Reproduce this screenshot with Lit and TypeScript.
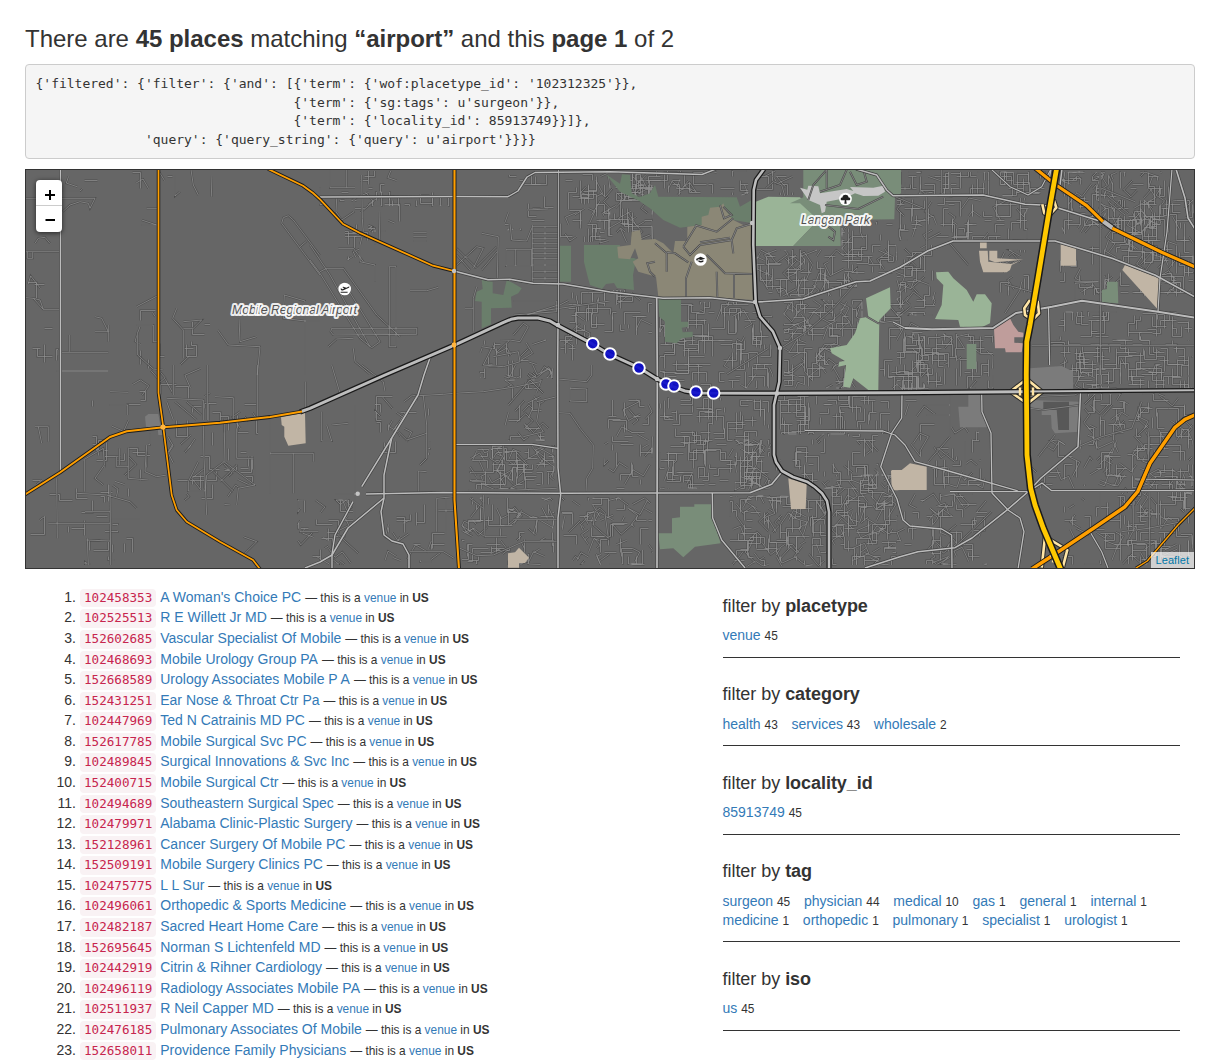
import { LitElement, html, svg, css } from "lit";
import { customElement, property } from "lit/decorators.js";

/* ---------- map data ---------- */

/** The map was digitised in sheets at three times its size; this brings a sheet's points to map units. */
const sheet = (ox: number, oy: number) => (points: string): string =>
  points
    .trim()
    .split(/\s+/)
    .map((pair) => {
      const [x, y] = pair.split(",").map(Number);
      return `${(ox + x / 3).toFixed(1)},${(oy + y / 3).toFixed(1)}`;
    })
    .join(" ");

const nw = sheet(20, 165);
const sw = sheet(20, 365);
const n2 = sheet(310, 165);
const s2 = sheet(310, 365);
const n3 = sheet(600, 165);
const s3 = sheet(600, 365);
const ne = sheet(895, 165);
const se = sheet(895, 365);

const MOSS = "#6a7e6b";
const SAGE = "#798d79";
const MINT = "#9ab497";
const CAMPUS = "#8b8776";
const SCHOOL = "#c1b5a5";
const PAVED = "#7b7b7b";

const AREAS: [string, string][] = [
  [MOSS, n2("750,242 783,242 783,350 750,350")],
  [MOSS, "584,245 620,245 618,258 634,258 638,260 635,265 633,275 634,290 617,288 614,283 606,284 602,289 590,285 588,278 584,262"],
  [MOSS, n2("515,345 548,350 548,385 580,390 590,345 610,355 635,370 625,385 603,395 605,428 543,430 543,478 515,490 515,410 495,408 500,380 518,372")],
  [MOSS, n3("18,28 60,56 66,28 90,30 95,85 118,97 150,85 165,60 175,95 410,97 420,125 455,105 458,175 400,165 360,145 305,180 240,188 190,165 150,130 118,108 60,80")],
  [CAMPUS, n3("370,115 380,140 400,165 430,180 455,178 458,405 330,395 175,395 168,335 115,320 98,290 115,280 105,250 90,283 55,280 52,245 92,240 95,200 120,195 125,225 165,222 190,235 220,265 225,228 262,228 262,185 305,180 305,155 325,150 330,128 360,125")],
  [MOSS, n3("175,402 243,402 243,470 265,470 265,485 245,488 248,502 278,500 278,515 245,520 230,535 195,530 195,470 178,455")],
  [MINT, n3("467,110 505,95 600,97 655,165 580,243 467,243")],
  [SAGE, n3("610,14 903,14 903,85 885,95 883,163 720,165 722,243 580,243 655,165 600,115 570,115 610,97")],
  ["#c6c6c6", n3("600,68 622,74 625,62 655,64 660,85 740,72 760,78 750,66 820,68 850,62 855,80 835,92 790,93 765,85 735,100 680,110 675,140 665,145 660,120 625,105 615,90")],
  [MINT, n3("870,367 872,430 838,465 835,678 805,675 760,640 750,668 730,665 738,600 715,605 718,590 735,588 695,565 690,550 740,540 765,505 780,460 805,455 798,400")],
  [MINT, ne("123,322 160,320 175,340 215,375 235,410 245,388 270,388 290,415 285,475 260,487 195,485 190,465 130,463 120,462 140,420 145,360 125,340")],
  [SCHOOL, ne("255,230 275,230 275,250 255,250")],
  [SCHOOL, ne("252,257 278,257 280,290 350,297 380,284 350,300 345,315 335,322 265,322 255,290")],
  [SCHOOL, ne("283,257 307,257 307,280 385,284 300,292 283,285")],
  [SCHOOL, ne("497,238 543,250 543,302 497,302")],
  [SCHOOL, ne("682,315 690,300 792,340 790,435")],
  [SAGE, ne("636,350 668,350 670,415 620,412 620,375 636,372")],
  [SAGE, ne("215,537 244,537 244,612 215,612")],
  ["#bf9d9b", ne("297,492 345,460 355,480 370,500 385,503 385,517 358,517 358,533 385,535 380,562 332,562 330,550 300,550")],
  [PAVED, se("405,10 500,3 535,20 535,75 405,75")],
  [PAVED, se("190,125 220,125 220,90 258,90 262,140 275,165 275,187 195,187")],
  [PAVED, se("405,105 552,110 552,200 480,205 470,190 468,150 440,150 440,135 405,135")],
  ["#585858", se("445,110 522,110 522,195 490,195 485,135 445,135")],
  [SCHOOL, se("-10,315 20,315 45,295 95,305 95,375 -10,375")],
  [SCHOOL, s3("565,340 620,358 617,432 573,433")],
  [SCHOOL, s3("873,317 895,317 895,376 876,376")],
  [SAGE, s3("175,505 216,505 216,460 240,457 240,425 283,425 283,418 333,418 338,460 362,535 285,545 250,577 220,550 180,553")],
  [SCHOOL, s2("594,565 615,562 627,548 657,578 645,594 627,594 627,608 594,608")],
  [SCHOOL, sw("783,157 855,143 857,235 805,242 793,215 793,185 785,180")],
  [PAVED, sw("375,155 385,147 415,147 422,185 428,210 415,210 413,190 378,185")],
  ["#4a4538", se("352,80 395,44 440,80 396,116")],
];

/** Grey roads: line width, then points. */
const ROADS: [number, string][] = [
  [1.4, "60.5,169 60.5,472"],
  [1.4, "320,197 454,196.5 508,196.7 518,191 527,177 535,172.5 610,171.7 702,174.5 716,169"],
  [1.6, "454,271 488,279.7 510,279.3 533,283.3 563,284 610,292 663,298.3 710,297.7 753,302.3 803,299 856,281.7 870,281 900,267.3 928,250.7 953,241 1055,241 1112,258.3 1155,275 1195,297"],
  [0.8, "558.5,169 558.5,325"],
  [1.5, "558,325 557.7,365 558,468 560.7,495 558,518 558,569"],
  [1.3, "454,444.3 531.7,444.3 558,448.3"],
  [1.6, "366,494 443,492.5 560,493.3 750,492.7 771.7,484.3 782,471.7"],
  [1.5, "430.7,355.7 424,375 418,395 391.7,438 361.7,486.7"],
  [1.4, "353,501.7 335,535 332,554 332,569"],
  [1.5, "391.7,438 384,475 384,498 381,511.7 384,535 392,541 403,544 409,555 409,569"],
  [1.5, "384,498 348,528 332,555 320,562 305,568"],
  [1.7, "656.7,298 657.3,375 657,569"],
  [1.4, "712.3,493 712.7,518 721.7,540 745,568"],
  [1.3, "805,430.3 883,431 895,435 905,445 915,461.7 945,470 1018,491"],
  [1.3, "902,393 901.7,418 891.7,433 880.7,466.7 897,499 903,520 910,526 941.7,529 951.7,535 952,569"],
  [1.5, "865,568 900,556.7 918,551.7 955,547.7 972,538 1005,511.7 1028,491.7 1041,478 1078,446.7 1080.5,393"],
  [1.3, "981.7,394 982,411.7 991,433 992,493 1008,510 1020,518 1024,531.7 1018,569"],
  [1.3, "950,491.7 1028,491.7 1042,483 1051.7,490.7 1195,490.7"],
  [1.1, "1135,479 1195,480"],
  [1.2, "1090,531.7 1101.7,551.7 1108,568"],
  [1.5, "856,169 876.7,175 886.7,190 893,195.7 983,195 1025,204.3 1041.7,205 1058,208 1102,221.7"],
  [1.1, "991,169 1010,186.7 1028,195 1041.7,186.7 1051,169"],
  [1.9, "905,328 932,329.3 993,328 1016,313 1052,306.7 1082,300.7 1158,311.7 1195,317.7"],
  [1.1, "893,322 905,328"],
  [1.2, "1172,169 1167,232 1160,278 1158,312"],
  [1.6, "1176,169 1185,198 1188,218 1195,229"],
  [1.2, "1048.5,308 1049.7,365"],
  [1.3, "1051,169 1049,180"],
  [1.5, "1062,169 1060,185"],
];

const ARTERIALS: [number, string][] = [
  [3, "300,412 310,408.3 385,375 454,345.3 503,322.7 511,319.3 518,318 538,318 550,321 558,325.7 592,343.7 609,354 639,367.7 657,379 674,387 685,391 697,393 777,393.3 895,392.7 1028,391.7"],
  [2, "1028,391.5 1195,390.3"],
  [2.6, "764,169 756,180 753.7,190 753.3,245 755.7,302.3 760,316.7 773,331.7 780,347.7 779.3,381.7 774,405 774,455 776,462 782,471 793,477 807,481.7 815,487 822,493.3 827,501 829,511.7 829,569"],
];

const ORANGE: [number, string][] = [
  [1.7, "158.5,169 158.5,393 163.3,427.3 171.7,495 176.7,510 186.7,521.7 220,541.7 253,560 260,569"],
  [2, "25,494.5 60,472.5 110,437 126.7,431.3 163.3,427.3 220,422.7 270,417 302,411.5"],
  [1.8, "268,169 303,185.7 313,193 320,199.3 343,224 360,233 433,265.7 454,271"],
  [2.1, "454.5,169 454.5,500 459,569"],
  [3.2, "1035,168 1056,185 1086.7,205.7 1103,221.7"],
  [3.2, "1112.3,228.3 1161.7,252.3 1195,267"],
  [3.5, "1032,569 1055,554 1095,527.3 1125,506.7 1137.7,491.7 1150,463.3 1175,427.3 1185,419.3 1195,415"],
  [1.4, "1136,568 1147.3,561 1178,525 1195,508"],
];

const RAMPS = [
  se("346,80 395,42 442,80 397,116 346,80"),
  se("440,608 450,515 517,555 503,608"),
  ne("405,405 388,430 390,450 412,465 432,445 428,408"),
  ne("442,118 448,145 462,152 484,128 476,104"),
];

const INTERSTATE =
  "1056.7,168 1049,211.7 1038,278 1030,325 1026.7,341.7 1026.3,375 1027,455 1030.7,488.3 1035,505 1043.3,528.3 1061,570";

/** Lanes traced by hand: airfield, campus and the larger estates. */
const LANES: string[] = [
  nw("900,330 785,175 790,158 805,152 820,165 900,272"),
  nw("840,245 860,228"),
  nw("128,140 150,120 180,110 205,115 210,130 225,100 18,100"),
  nw("128,78 180,78 187,72"), nw("18,260 120,260"), nw("22,260 22,280 38,280 38,262"),
  nw("18,398 40,400 70,433 120,433"), nw("40,400 60,405 70,433"),
  nw("45,235 55,220 75,217 90,235"), nw("350,425 413,392"),
  nw("125,562 265,562"), nw("125,618 265,618"), nw("148,510 148,560"),
  nw("465,30 465,93 480,80"), nw("513,14 520,60 535,90"), nw("573,30 575,95"),
  nw("380,130 413,130"), nw("365,165 410,180 365,180"), nw("350,480 400,480 400,530 413,530"),
  nw("353,500 353,570 400,612 430,615"), nw("470,430 458,460 490,495 490,580"), nw("490,470 545,465 520,490 490,490"),
  nw("593,495 625,540 720,545 712,630"), nw("657,460 660,530 710,515"), nw("793,390 790,460 855,468 900,468"),
  nw("793,390 855,408 855,630"), nw("265,480 265,530"), nw("225,455 245,460 265,500 225,500"),
  n2("0,240 60,330 180,545"), n2("0,285 30,325 150,520 185,548 210,530 100,350"),
  n2("30,320 50,310 100,310 200,450 270,515"), n2("65,490 320,490 320,508 70,510 62,500 65,490"),
  n2("238,305 238,545 258,545 258,305 238,305"), n2("55,545 80,522 130,520"), n2("130,550 135,590 180,628"),
  n2("155,30 157,160 160,200 150,240 150,290 195,300 195,350"), n2("85,250 130,250 160,290"),
  n2("60,14 60,68 135,68"), n2("110,14 110,68"), n2("80,100 78,140 95,165 132,140 132,100"),
  n2("300,377 350,377 385,367"), n2("208,230 210,135"), n2("310,203 350,203"), n2("310,215 350,215"), n2("310,228 350,228"),
  n2("515,205 565,215 562,340"), n2("440,300 500,245 520,250 490,310"), n2("500,305 560,245"), n2("515,315 562,260"),
  n2("440,250 500,310"), n2("440,270 480,315"), n2("588,253 665,253 665,303 588,303 588,253"), n2("617,253 617,303"),
  n2("667,185 745,185"), n2("667,205 745,205"), n2("667,220 745,220"), n2("667,235 745,235"), n2("667,250 745,250"),
  n2("667,265 745,265"), n2("667,280 745,280"), n2("667,300 745,300"), n2("667,320 745,320"), n2("667,340 745,340"),
  n2("667,180 667,350"), n2("705,185 705,350"), n2("500,365 490,400 490,500"), n2("465,430 490,430"),
  n2("650,135 715,132"), n2("600,175 605,225 650,228 665,190"), n2("610,408 740,408 740,440 610,450"),
  n2("515,545 545,550 520,600 580,605 630,590 625,560 550,575"), n2("610,510 640,475 655,485 630,530 600,525"),
  n2("680,440 900,408"), n2("650,450 745,420"),
  s2("135,120 135,470"), s2("35,140 35,228 65,228 50,180"), s2("65,180 115,175"), s2("325,92 400,88 432,85 520,80 620,65 690,50"),
  s2("65,0 90,85"), s2("155,0 220,50 225,80"), s2("325,318 325,380"), s2("325,318 350,320"), s2("340,92 350,180 350,280 330,300"),
  s2("265,200 290,225 350,205"), s2("380,400 432,395"), s2("380,400 380,500"), s2("385,437 432,437"), s2("408,400 408,510"),
  s2("745,143 780,145 810,190 850,240 848,310 830,340 828,380"), s2("745,42 830,50 845,30 845,0"), s2("780,70 830,72 830,110 780,108 780,50"),
  s2("540,240 540,280 565,295 580,270 580,240"), s2("475,375 620,375 740,370"), s2("485,350 525,350"), s2("485,323 525,323"),
  s2("595,120 660,45 700,85"), s2("680,110 740,95"), s2("690,110 680,170 700,200 640,215"),
  s2("450,550 500,572 550,570 640,530 745,530"), s2("610,463 745,463"), s2("520,390 525,515 590,515"), s2("480,400 520,430"),
  s2("855,440 870,430 885,445 895,520 850,480 855,440"), s2("300,560 400,560 432,580"), s2("85,510 145,565"), s2("75,387 140,387"),
  sw("45,185 85,185 85,230"), sw("55,185 65,235"), sw("110,18 265,18"), sw("268,120 323,120 323,150"), sw("270,80 325,82"),
  sw("190,285 250,250 253,300 225,340 250,360"), sw("193,285 193,380"), sw("170,385 260,390 330,410 350,430"),
  sw("85,475 270,475"), sw("110,340 112,520"), sw("195,440 270,440"), sw("270,360 272,600"), sw("275,462 360,462"),
  sw("200,525 270,528"), sw("202,520 205,600"), sw("290,275 290,305 325,305"), sw("325,248 325,340 385,345"), sw("298,250 298,300"),
  sw("380,240 375,320 410,335 440,330"), sw("440,100 550,105 550,165"), sw("440,110 460,165"), sw("465,110 530,165"),
  sw("500,110 545,150"), sw("585,95 640,98 640,160"), sw("550,180 552,280 560,450"), sw("615,160 612,290"),
  sw("535,290 505,350 505,378 555,378 560,330 612,290 705,360"), sw("580,320 640,380"), sw("600,350 650,300"),
  sw("650,190 650,280 700,280"), sw("705,300 705,360 655,370 650,420"), sw("750,155 750,385"), sw("750,265 880,265 880,290"),
  sw("820,265 820,385"), sw("712,0 712,155"), sw("562,0 562,165"), sw("857,50 857,140"), sw("460,0 460,90"),
  sw("670,515 710,530 670,570"), sw("840,470 840,500 895,500"),
  n3("285,180 350,200 400,160"), n3("250,245 290,180"), n3("250,245 270,270 300,240 395,225 410,190 450,178"),
  n3("300,232 390,218"), n3("395,225 400,265"), n3("320,270 375,325 458,327"), n3("275,290 258,340 258,395"),
  n3("350,320 352,395"), n3("402,327 402,398"), n3("165,235 200,265 200,320"), n3("200,262 225,265 265,292"),
  n3("165,335 150,320 142,295 165,290"), n3("360,120 372,160 395,150 370,125"),
  n3("625,105 640,60 680,14"), n3("680,14 680,70"), n3("660,80 720,60 740,14"), n3("675,120 775,132 850,95"),
  n3("680,180 705,200 700,225 685,215"), n3("750,20 770,60 800,50 790,14"), n3("498,70 520,50 545,60 555,95"),
  n3("545,548 620,500 700,430 770,350"), n3("505,550 380,628"), n3("800,455 835,475 900,465"),
  ne("620,70 720,110"), ne("635,90 700,145"), ne("640,110 690,150"), ne("330,445 375,375 380,350"), ne("160,230 220,300"),
  ne("615,14 617,630"), ne("165,14 165,80"), ne("140,14 140,85"), ne("410,542 897,542"), ne("330,358 410,380"),
  ne("95,85 95,260"), ne("0,95 85,130"), ne("540,350 610,350 540,355 540,400"),
  se("405,130 440,135 555,120"), se("430,275 480,210"), se("550,245 620,215 710,190 740,110"), se("55,235 75,205 100,215 75,258"),
  se("100,290 165,215"), se("130,250 180,290"), se("210,230 210,340"), se("95,120 165,120"), se("95,150 165,150"), se("165,90 165,215"),
  se("400,95 540,90 548,85"), se("615,0 615,60 700,60"), se("615,380 615,490"), se("760,200 765,600"), se("185,540 290,440"),
  se("680,500 760,490 860,470"), se("790,380 790,480"), se("715,390 715,500"),
];

/** Residential zones: x, y, width, height, how many lanes, share of slanted ones. */
const ZONES: number[][] = [
  [28, 275, 30, 90, 8, 0.4], [28, 480, 90, 80, 16, 0.2], [90, 380, 60, 115, 18, 0.2], [168, 400, 90, 105, 40, 0.4],
  [65, 171, 120, 20, 6, 0.2], [135, 310, 75, 100, 20, 0.4], [85, 530, 50, 34, 6, 0.2], [298, 500, 55, 64, 28, 0.5], [320, 171, 80, 60, 16, 0.3],
  [345, 225, 30, 35, 10, 0.4], [375, 395, 55, 60, 20, 0.3], [385, 500, 60, 62, 18, 0.4], [340, 192, 110, 14, 14, 0], [505, 175, 50, 55, 14, 0.3],
  [560, 172, 50, 70, 40, 0.3], [480, 340, 72, 38, 28, 0.5], [505, 380, 48, 60, 26, 0.4], [470, 446, 84, 44, 70, 0.4],
  [462, 498, 92, 66, 66, 0.4], [560, 290, 92, 45, 46, 0.2], [560, 325, 30, 36, 14, 0.4], [604, 400, 48, 90, 34, 0.4], [562, 498, 90, 66, 60, 0.5],
  [600, 185, 52, 58, 44, 0.4], [630, 171, 118, 24, 44, 0.3], [660, 302, 112, 86, 120, 0.1], [660, 398, 110, 90, 120, 0.1],
  [735, 440, 44, 50, 34, 0.6], [730, 496, 96, 70, 110, 0.4], [757, 171, 40, 24, 10, 0.4], [757, 250, 100, 46, 80, 0.3], [784, 300, 78, 88, 110, 0.4],
  [778, 396, 112, 38, 56, 0], [780, 434, 98, 54, 50, 0.2], [832, 475, 64, 90, 110, 0.35], [842, 222, 54, 54, 40, 0.2],
  [880, 300, 44, 90, 40, 0.1], [897, 172, 150, 24, 56, 0.1], [897, 198, 130, 42, 70, 0.1], [897, 245, 38, 70, 40, 0.3],
  [897, 334, 96, 54, 74, 0.1], [1000, 250, 30, 48, 12, 0.5], [905, 400, 74, 60, 18, 0.3], [897, 494, 90, 70, 60, 0.4], [925, 460, 60, 30, 16, 0.3],
  [1050, 340, 142, 48, 110, 0.05], [1052, 312, 140, 28, 40, 0], [1062, 172, 108, 62, 96, 0.4], [1105, 200, 88, 96, 130, 0.25],
  [1060, 245, 60, 50, 20, 0.2], [1084, 394, 108, 92, 110, 0.4], [1060, 494, 130, 70, 50, 0.3], [1122, 470, 70, 94, 70, 0.3], [1030, 440, 50, 48, 14, 0.5],
];

const streets = (): string => {
  let seed = 20160117;
  const rnd = () => {
    seed = (Math.imul(seed, 1664525) + 1013904223) >>> 0;
    return seed / 4294967296;
  };
  const out: string[] = [];
  for (const [zx, zy, w, h, count, slant] of ZONES) {
    const clampX = (v: number) => Math.max(zx, Math.min(zx + w, v));
    const clampY = (v: number) => Math.max(zy, Math.min(zy + h, v));
    for (let i = 0; i < count; i++) {
      let x = Math.round((zx + rnd() * w) / 4) * 4 + 0.5;
      let y = Math.round((zy + rnd() * h) / 4) * 4 + 0.5;
      const tilt = rnd() < slant ? 0.3 + rnd() * 0.9 : 0;
      let upright = rnd() < 0.55;
      let d = `M${x},${y}`;
      const legs = 1 + Math.floor(rnd() * 2.4);
      for (let k = 0; k < legs; k++) {
        const length = (rnd() < 0.5 ? -1 : 1) * (4 + Math.round(rnd() * (upright ? 14 : 12)));
        const dx = upright ? 0 : length;
        const dy = upright ? length : 0;
        x = clampX(x + dx * Math.cos(tilt) - dy * Math.sin(tilt));
        y = clampY(y + dx * Math.sin(tilt) + dy * Math.cos(tilt));
        d += `L${x.toFixed(1)},${y.toFixed(1)}`;
        upright = !upright;
      }
      out.push(d);
    }
  }
  return out.join("");
};

const STREETS = streets();
const LANE_PATH = LANES.map((l) => `M${l.replace(/ /g, "L")}`).join("");

const MARKERS = [[592.7, 343.7], [610, 354], [639, 368], [666, 384], [674, 386], [696, 392], [713.7, 393]];
const NODES = [[454, 345], [454, 271], [163, 427], [657, 379], [777, 393.5], [755, 302], [780, 348], [558, 325], [357.7, 493.7], [752, 223]];

@customElement("place-map")
class PlaceMap extends LitElement {
  static styles = css`
    :host { display: block; position: relative; height: 398px; border: 1px solid #333; background: #666; overflow: hidden; }
    .canvas { display: block; width: 1168px; height: 398px; }
    .line { fill: none; stroke-linejoin: round; }
    .street-edge { fill: none; stroke: #4c4c4c; stroke-width: 2; }
    .street { fill: none; stroke: #919191; stroke-width: 0.75; }
    .label { font: italic 12.5px "Liberation Sans", Arial, sans-serif; fill: #505050; stroke: #fff; stroke-opacity: 0.9; stroke-width: 4px; paint-order: stroke; stroke-linejoin: round; }
    .zoom { position: absolute; left: 10px; top: 10px; width: 26px; border-radius: 4px; background: #fff; box-shadow: 0 1px 5px rgba(0, 0, 0, 0.65); }
    .zoom-button { display: flex; align-items: center; justify-content: center; box-sizing: border-box; height: 26px; padding: 5px 0 0 1px; }
    .zoom-button:first-child { border-bottom: 1px solid #ccc; }
    .zoom-button + .zoom-button { padding-top: 1px; }
    .credit { position: absolute; right: 0; bottom: 0; padding: 0 5px; font: 11px/16px "Liberation Sans", Arial, sans-serif; letter-spacing: 0.05px; color: #0078a8; background: rgba(255, 255, 255, 0.7); }
  `;

  private cased(lines: [number, string][], color: string, edge: string, extra: number) {
    return svg`
      ${lines.map(([w, p]) => svg`<polyline class="line" points=${p} stroke=${edge} stroke-width=${w + extra}></polyline>`)}
      ${lines.map(([w, p]) => svg`<polyline class="line" points=${p} stroke=${color} stroke-width=${w}></polyline>`)}`;
  }

  render() {
    return html`
      <svg class="canvas" viewBox="26 170 1168 398" aria-hidden="true">
        <path class="street-edge" d=${STREETS}></path>
        <path class="street" d=${STREETS}></path>
        ${AREAS.map(([fill, p]) => svg`<polygon points=${p} fill=${fill}></polygon>`)}
        <path class="street-edge" d=${LANE_PATH}></path>
        <path class="street" d=${LANE_PATH}></path>
        ${this.cased(ROADS, "#bcbcbc", "#424242", 1.4)}
        ${this.cased(RAMPS.map((p) => [2.6, p] as [number, string]), "#ffe5a5", "#2b2b2b", 2)}
        ${this.cased([[4, "1100,219 1114,229"]], "#b9b9b9", "#222", 2)}
        ${this.cased(ARTERIALS, "#bdbdbd", "#1a1a1a", 2.4)}
        ${this.cased(ORANGE, "#ff9f00", "#1c1c1c", 1.8)}
        ${NODES.map(([x, y]) => svg`<circle cx=${x} cy=${y} r="2.2" fill="#c4c4c4"></circle>`)}
        <circle cx="454" cy="345" r="2.4" fill="#ffb540"></circle>
        <circle cx="163" cy="427" r="2.6" fill="#ffb540"></circle>
        <path d="M1020 387.5v8M1033 387.5v8M1050 556l5-2M1052 561l5 1" stroke="#ffe5a5" stroke-width="2.4"></path>
        ${this.cased([[4.8, INTERSTATE]], "#ffc800", "#1a1a1a", 3)}

        <circle cx="344.7" cy="289" r="6.3" fill="#fff"></circle>
        <path d="M340.6 291.7h7v1h-7zM340.4 288.8l1-.2 1.2.7 1.5-.7-1.8-1.5 1-.3 3 .9 2.2-1c.9-.4 1.3.5.4 1l-6 2.7c-.9.4-1.6.2-2.5-1.6z" fill="#222"></path>
        <circle cx="700.5" cy="259.5" r="6.3" fill="#fff"></circle>
        <path d="M696 259l4.6-2.3 4.6 2-4.3 1.4-2.3-.8-1 .5-.4 1.8zM698.4 260.2l2.4.9 2.6-.9v1.5c-1.6 1-3.6 1-5 0z" fill="#222"></path>
        <circle cx="845.5" cy="199" r="6.3" fill="#fff"></circle>
        <path d="M841.5 200.3c-1.6-1-.6-3 .9-2.8.2-2 1.7-2.7 3.1-2.7s2.9.7 3.1 2.7c1.5-.2 2.5 1.8.9 2.8h-3.3l.5 3.500h-2.400l.5-3.500z" fill="#222"></path>

        <text class="label" x="232" y="314" textLength="125" lengthAdjust="spacing">Mobile Regional Airport</text>
        <text class="label" x="801" y="224" textLength="69" lengthAdjust="spacing">Langan Park</text>

        ${MARKERS.map(([x, y]) => svg`<circle cx=${x} cy=${y} r="5.8" fill="#0c0ccb" fill-opacity=".93" stroke="#fff" stroke-width="2"></circle>`)}
      </svg>
      <div class="zoom">
        <div class="zoom-button"><svg width="12" height="12" viewBox="0 0 12 12"><path d="M1 6h10M6 1v10" stroke="#000" stroke-width="2"></path></svg></div>
        <div class="zoom-button"><svg width="12" height="12" viewBox="0 0 12 12"><path d="M1.5 6h9.5" stroke="#000" stroke-width="2"></path></svg></div>
      </div>
      <div class="credit">Leaflet</div>
    `;
  }
}

/* ---------- search facets ---------- */

@customElement("facet-block")
class FacetBlock extends LitElement {
  @property() name = "";
  @property({ attribute: false }) entries: [string, number][] = [];

  static styles = css`
    :host { display: block; border-bottom: 1px solid #333; padding: 26.2px 0 11.5px; }
    .title { margin: 0 0 10.5px; font-size: 18px; line-height: 20px; font-weight: 500; letter-spacing: -0.04px; }
    .title-name { font-weight: 700; }
    .entries { display: flex; flex-wrap: wrap; column-gap: 13.8px; margin: 0; padding: 0; list-style: none; line-height: 19.2px; }
    .entry { height: 19.2px; white-space: nowrap; }
    .link { color: #337ab7; }
    .count { font-size: 11.9px; }
  `;

  render() {
    return html`
      <h4 class="title">filter by <span class="title-name">${this.name}</span></h4>
      <ul class="entries">
        ${this.entries.map(([label, n]) => html`<li class="entry"><a class="link">${label}</a> <span class="count">${n}</span></li>`)}
      </ul>`;
  }
}

const QUERY = `{'filtered': {'filter': {'and': [{'term': {'wof:placetype_id': '102312325'}},
                                 {'term': {'sg:tags': u'surgeon'}},
                                 {'term': {'locality_id': 85913749}}]},
              'query': {'query_string': {'query': u'airport'}}}}`;

const PLACES: [string, string][] = [
  ["102458353", "A Woman's Choice PC"],
  ["102525513", "R E Willett Jr MD"],
  ["152602685", "Vascular Specialist Of Mobile"],
  ["102468693", "Mobile Urology Group PA"],
  ["152668589", "Urology Associates Mobile P A"],
  ["152431251", "Ear Nose & Throat Ctr Pa"],
  ["102447969", "Ted N Catrainis MD PC"],
  ["152617785", "Mobile Surgical Svc PC"],
  ["102489845", "Surgical Innovations & Svc Inc"],
  ["152400715", "Mobile Surgical Ctr"],
  ["102494689", "Southeastern Surgical Spec"],
  ["102479971", "Alabama Clinic-Plastic Surgery"],
  ["152128961", "Cancer Surgery Of Mobile PC"],
  ["152509191", "Mobile Surgery Clinics PC"],
  ["102475775", "L L Sur"],
  ["102496061", "Orthopedic & Sports Medicine"],
  ["102482187", "Sacred Heart Home Care"],
  ["152695645", "Norman S Lichtenfeld MD"],
  ["102442919", "Citrin & Rihner Cardiology"],
  ["102496119", "Radiology Associates Mobile PA"],
  ["102511937", "R Neil Capper MD"],
  ["102476185", "Pulmonary Associates Of Mobile"],
  ["152658011", "Providence Family Physicians"],
];

const FACETS: [string, [string, number][]][] = [
  ["placetype", [["venue", 45]]],
  ["category", [["health", 43], ["services", 43], ["wholesale", 2]]],
  ["locality_id", [["85913749", 45]]],
  ["tag", [["surgeon", 45], ["physician", 44], ["medical", 10], ["gas", 1], ["general", 1], ["internal", 1],
    ["medicine", 1], ["orthopedic", 1], ["pulmonary", 1], ["specialist", 1], ["urologist", 1]]],
  ["iso", [["us", 45]]],
];

@customElement("app-root")
class AppRoot extends LitElement {
  static styles = css`
    :host { display: block; box-sizing: border-box; height: 1061px; overflow: hidden; padding: 25px 36px 0 25px; background: #fff; color: #333; font: 14px/20px "Liberation Sans", Arial, sans-serif; }
    .headline { margin: 0; font-size: 24px; line-height: 27px; font-weight: 500; letter-spacing: -0.01px; white-space: nowrap; }
    .query { margin: 12px 0 10px; box-sizing: border-box; height: 95px; padding: 10px 9.5px 9px; border: 1px solid #ccc; border-radius: 4px; background: #f5f5f5; font: 13px/18.57px "DejaVu Sans Mono", "Liberation Mono", monospace; letter-spacing: -0.01px; }
    .columns { display: grid; grid-template-columns: 697.5px 457.5px; }
    .places { margin: 0; padding: 17.8px 0 0; list-style: none; }
    .place { display: flex; align-items: baseline; height: 20.59px; line-height: 20.59px; white-space: nowrap; }
    .rank { width: 51px; margin-right: 4px; text-align: right; }
    .id { padding: 2px 4px; margin-right: 4px; border-radius: 4px; background: #f9f2f4; color: #c7254e; font: 12.6px/14.6px "DejaVu Sans Mono", "Liberation Mono", monospace; }
    .link { color: #337ab7; }
    .note { margin-left: 4px; font-size: 11.9px; }
    .facets { padding-top: 0.7px; }
  `;

  render() {
    return html`
      <h3 class="headline">There are <b>45 places</b> matching <b>“airport”</b> and this <b>page 1</b> of 2</h3>
      <pre class="query">${QUERY}</pre>
      <place-map></place-map>
      <div class="columns">
        <ol class="places">
          ${PLACES.map(([id, title], i) => html`
            <li class="place">
              <span class="rank">${i + 1}.</span><code class="id">${id}</code><a class="link">${title}</a>
              <span class="note">— this is a <a class="link">venue</a> in <b>US</b></span>
            </li>`)}
        </ol>
        <div class="facets">
          ${FACETS.map(([name, entries]) => html`<facet-block name=${name} .entries=${entries}></facet-block>`)}
        </div>
      </div>`;
  }
}
